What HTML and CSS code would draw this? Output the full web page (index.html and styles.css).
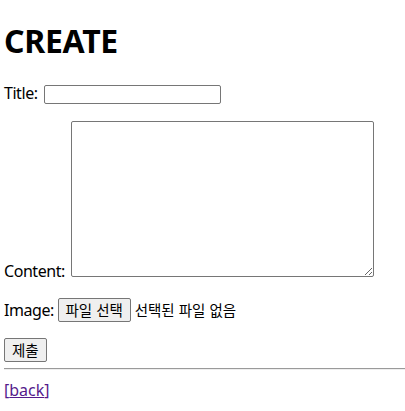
FILE: index.html
```html
<!DOCTYPE html>
<html lang="ko">
<head>
<meta charset="utf-8">
<title>CREATE</title>
<link rel="stylesheet" href="styles.css">
</head>
<body>
<h1 class="title">CREATE</h1>
<form class="form">
  <p class="row">Title: <input class="text-input" type="text" name="title"></p>
  <p class="row">Content: <textarea class="text-area" name="content"></textarea></p>
  <p class="row">Image: <button class="btn" type="button">파일 선택</button> <span class="file-status">선택된 파일 없음</span></p>
  <p class="row row-last"><button class="btn" type="submit">제출</button></p>
</form>
<hr class="rule">
<a class="back" href="#">[<span class="back-label">back</span>]</a>
</body>
</html>
```
FILE: styles.css
```css
html, body {
  background: #ffffff;
}
body {
  margin: 0 0 0 4px;
  padding-top: 1px;
  font-family: "Noto Sans", "Noto Sans CJK KR", sans-serif;
  font-size: 16px;
  line-height: 21px;
  color: #000000;
  letter-spacing: -0.45px;
}
.title {
  font-size: 32px;
  font-weight: bold;
  margin: 18px 0 21px 0;
  line-height: 43px;
  letter-spacing: -0.3px;
}
.form {
  margin: 0;
}
.row {
  margin: 16px 0;
}
.row-last {
  margin-bottom: 0;
}
.text-input {
  font-family: "Noto Sans", "Noto Sans CJK KR", sans-serif;
  font-size: 13px;
  width: 171px;
  height: 15px;
  padding: 1px 2px;
  border: 1px solid #767676;
  border-radius: 2px;
  margin: 0 0 0 3px;
}
.text-area {
  font-family: "Liberation Mono", monospace;
  font-size: 13px;
  width: 297px;
  height: 150px;
  padding: 2px;
  border: 1px solid #767676;
  border-radius: 2px;
  margin: 1px 0 0 2px;
}
.btn {
  font-family: "Noto Sans CJK KR", sans-serif;
  font-size: 14.5px;
  line-height: 18px;
  height: 24px;
  padding: 1px 7px;
  background: #efefef;
  border: 1px solid #767676;
  border-radius: 2px;
  color: #000000;
  margin: 0;
  letter-spacing: 0;
}
.file-status {
  font-family: "Noto Sans CJK KR", sans-serif;
  font-size: 14.5px;
  letter-spacing: 0;
}
.rule {
  margin: 6px 0 0 0;
  border: 0;
  border-top: 1px solid #9a9a9a;
  border-bottom: 1px solid #eeeeee;
  height: 0;
}
.back {
  display: inline-block;
  margin-top: 10px;
  color: #551a8b;
  text-decoration: none;
  letter-spacing: 0;
}
.back-label {
  text-decoration: underline;
}
```
